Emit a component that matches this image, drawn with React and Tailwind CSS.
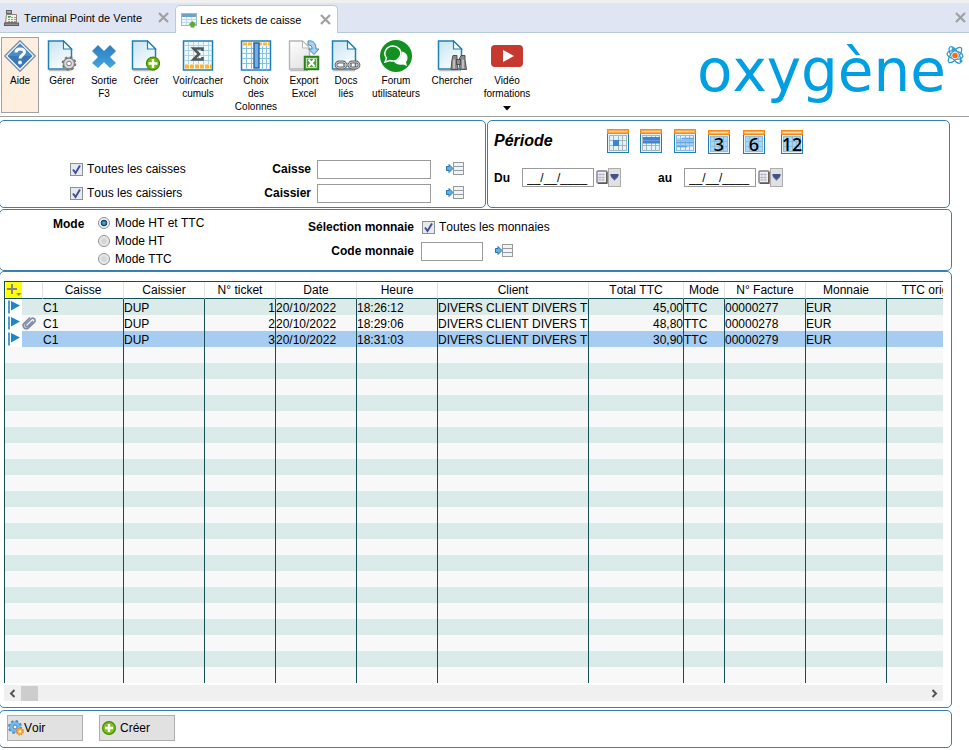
import React from "react";

/* ---------- small drawings ---------- */

function Cross({ size = 11 }) {
  return (
    <svg width={size} height={size} viewBox="0 0 11 11" aria-hidden="true">
      <path d="M1 1l9 9M10 1l-9 9" stroke="#a0a0a0" strokeWidth="2.2" fill="none" />
    </svg>
  );
}

function RegisterIcon() {
  return (
    <svg width="16" height="16" viewBox="0 0 16 16" aria-hidden="true">
      <rect x="2.500" y="0.500" width="5" height="3" fill="#a8a8a8" stroke="#666" />
      <rect x="4" y="3" width="2" height="2" fill="#666" />
      <path d="M2.500 4.500h10v8h-11z" fill="#f3f0ea" stroke="#8c8478" />
      <path d="M4 7.500h8M4 9.500h8M4 11.500h8" stroke="#f0842a" strokeDasharray="2 1" />
      <path d="M4 6.500h3" stroke="#3a9d46" />
      <rect x="0.500" y="13" width="14" height="2.500" fill="#8f8f8f" stroke="#5d5d5d" />
    </svg>
  );
}

function TicketTabIcon() {
  return (
    <svg width="17" height="16" viewBox="0 0 17 16" aria-hidden="true">
      <rect x="0.500" y="1.500" width="15" height="12" fill="#eef7fb" stroke="#9dbccf" />
      <rect x="1" y="2" width="14" height="3" fill="#6ba3c8" />
      <path d="M1 7.500h14M1 10.500h14M5.500 5v8M10.500 5v8" stroke="#bcdbe9" />
      <path d="M11.500 9l4 3.500-2 .5v2.500h-4V13l-2-.500z" fill="#5cab2e" />
    </svg>
  );
}

function IconBox({ children, box = "0 0 32 32" }) {
  return (
    <svg width="32" height="32" viewBox={box} className="shrink-0" aria-hidden="true">
      <defs>
        <linearGradient id="sheetFill" x1="0" y1="0" x2="0.6" y2="1">
          <stop offset="0" stopColor="#c5e4f3" />
          <stop offset="1" stopColor="#fbfdfe" />
        </linearGradient>
        <linearGradient id="crossFill" x1="0" y1="0" x2="0" y2="1">
          <stop offset="0" stopColor="#2e7fc0" />
          <stop offset="1" stopColor="#43a3df" />
        </linearGradient>
        <linearGradient id="greyFill" x1="0" y1="0" x2="0.6" y2="1">
          <stop offset="0" stopColor="#ffffff" />
          <stop offset="1" stopColor="#e4e4e4" />
        </linearGradient>
      </defs>
      {children}
    </svg>
  );
}

const sheetBox = "1 0 32 32";

function Sheet() {
  return (
    <g>
      <path d="M4 30.500h22" stroke="#bbb" strokeWidth="1.500" />
      <path d="M3.500 1h15l8 8v20h-23z" fill="url(#sheetFill)" stroke="#2080b4" strokeWidth="1.500" />
      <path d="M18.500 1v8h8z" fill="#fff" stroke="#2080b4" strokeWidth="1.200" />
    </g>
  );
}

function HelpIcon() {
  return (
    <IconBox>
      <path d="M16 0.800L31.200 16 16 31.200 0.800 16z" fill="#fff" stroke="#7c91a8" strokeWidth="1.500" strokeLinejoin="round" />
      <path d="M16 3.500L28.500 16 16 28.500 3.500 16z" fill="#3a78b5" />
      <path d="M16 3.500L28.500 16h-25z" fill="#4b8bc6" />
      <path d="M12 12.500c0-4.500 8.500-4.500 8.500-.500 0 3-4.500 3-4.500 6.500" fill="none" stroke="#fff" strokeWidth="3" />
      <circle cx="16" cy="22.500" r="1.900" fill="#fff" />
    </IconBox>
  );
}

function ManageIcon() {
  return (
    <IconBox box={sheetBox}>
      <Sheet />
      <circle cx="24" cy="23.500" r="6.300" fill="#999" stroke="#777" strokeWidth="2" strokeDasharray="2.500 2.450" />
      <circle cx="24" cy="23.500" r="5.300" fill="#dcdcdc" stroke="#7c7c7c" />
      <circle cx="24" cy="23.500" r="2.300" fill="#fff" stroke="#777" />
    </IconBox>
  );
}

function ExitIcon() {
  return (
    <IconBox>
      <path d="M10 5l6 6 6-6 6 6-6 6 6 6-6 5-6-6-6 6-6-5 6-6-6-6z" fill="url(#crossFill)" />
    </IconBox>
  );
}

function CreateIcon() {
  return (
    <IconBox box={sheetBox}>
      <Sheet />
      <circle cx="24" cy="23.500" r="6.500" fill="#6db70b" stroke="#3f8407" strokeWidth="1.200" />
      <path d="M24 19v9M19.500 23.500h9" stroke="#fff" strokeWidth="2.500" />
    </IconBox>
  );
}

function SumIcon() {
  return (
    <IconBox>
      <rect x="1.500" y="1" width="29" height="29" fill="#f2f9fc" stroke="#2080b4" strokeWidth="1.500" />
      <path d="M2 5.500h28M2 10.500h28M2 15.500h28M2 20.500h28M6.500 2v22M11.500 2v22M16.500 2v22M21.500 2v22M26.500 2v22" stroke="#a9d4ea" />
      <path d="M3 26.500h27" stroke="#fbb734" strokeWidth="4" strokeDasharray="4 1" />
      <path d="M20.500 11V8.500H11.500l5.500 5.500-5.500 5.500h9V17" fill="none" stroke="#555" strokeWidth="2.600" />
    </IconBox>
  );
}

function ColumnsIcon() {
  return (
    <IconBox>
      <rect x="1.500" y="1" width="29" height="29" fill="#f6fbfd" stroke="#2080b4" strokeWidth="1.500" />
      <path d="M3 4h27" stroke="#fbb734" strokeWidth="3" strokeDasharray="4 1" />
      <path d="M2 8.500h28M2 13.500h28M2 18.500h28M2 23.500h28M6.500 6v24M11.500 6v24M22.500 6v24M26.500 6v24" stroke="#85c1e0" />
      <rect x="14" y="3" width="5" height="25" fill="#75aee4" stroke="#165a9c" strokeWidth="1.300" />
    </IconBox>
  );
}

function ExcelIcon() {
  return (
    <IconBox>
      <path d="M2 30.500h18" stroke="#bbb" strokeWidth="1.500" />
      <path d="M1.500 1h13l7 7v21h-20z" fill="url(#greyFill)" stroke="#b5b5b5" strokeWidth="1.400" />
      <path d="M14.500 1v7h7z" fill="#fff" stroke="#b5b5b5" />
      <path d="M20 1c5-1 8 2 8 8H31l-5 5.500-5.500-5.500h3.500c0-3-1-4-4-4z" fill="#a6d0ef" stroke="#4389c2" />
      <rect x="16.500" y="16.500" width="14" height="13" fill="#4fa136" stroke="#2f7d20" strokeWidth="1.500" />
      <rect x="18.500" y="18.500" width="10" height="9" fill="none" stroke="#d9efd0" strokeWidth="0.800" />
      <path d="M20.500 19.500l6 7M26.500 19.500l-6 7" stroke="#fff" strokeWidth="2" />
    </IconBox>
  );
}

function LinkedDocsIcon() {
  return (
    <IconBox box={sheetBox}>
      <Sheet />
      <g fill="none" stroke="#666" strokeWidth="2.800">
        <rect x="7" y="22" width="10" height="6" rx="3" />
        <rect x="20" y="22" width="10" height="6" rx="3" />
        <path d="M14 25h9" />
      </g>
      <g fill="none" stroke="#ccc" strokeWidth="1">
        <rect x="7" y="22" width="10" height="6" rx="3" />
        <rect x="20" y="22" width="10" height="6" rx="3" />
        <path d="M14 25h9" />
      </g>
    </IconBox>
  );
}

function ForumIcon() {
  return (
    <IconBox>
      <circle cx="16" cy="16" r="16" fill="#109120" />
      <path d="M13 6a8 7.500 0 0 0-6.500 12L5 22l5-1.500A8 7.500 0 1 0 13 6z" fill="none" stroke="#fff" strokeWidth="1.500" />
      <path d="M21.500 11.500c4 .5 6 3.500 6 6.500 0 2-.7 3-1.500 4l1 4-4-1.500c-4 .8-8-.5-9.500-3.500 5 0 8.500-4 8-9.500z" fill="#fff" />
    </IconBox>
  );
}

function SearchIcon() {
  return (
    <IconBox box={sheetBox}>
      <Sheet />
      <g fill="#8b8b8b" stroke="#505050">
        <path d="M18 15.500h4v4l1 10h-7l1-10zM26 15.500h4v4l1.500 10h-6.500l-1-10z" />
        <rect x="21.500" y="19.500" width="4" height="5" />
      </g>
      <path d="M19 19.500v9M28 19.500v9" stroke="#d0d0d0" strokeWidth="1.500" />
    </IconBox>
  );
}

function VideoIcon() {
  return (
    <IconBox>
      <rect x="0" y="5" width="32" height="22" rx="4" fill="#c5392f" />
      <path d="M12 10l11 6-11 6z" fill="#fff" />
    </IconBox>
  );
}

function AtomMark() {
  return (
    <svg width="18" height="20" viewBox="0 0 18 20" className="mt-0.5" aria-hidden="true">
      <g fill="none" stroke="#2d9bd6" strokeWidth="1.300">
        <ellipse cx="9" cy="10" rx="9.500" ry="3.800" transform="rotate(58 9 10)" />
        <ellipse cx="9" cy="10" rx="9.500" ry="3.800" transform="rotate(-50 9 10)" />
        <ellipse cx="9" cy="10" rx="8" ry="4" transform="rotate(10 9 10)" />
      </g>
      <circle cx="9" cy="10.500" r="3.300" fill="#ff6a0d" stroke="#fff" strokeWidth="0.800" />
      <circle cx="15" cy="16" r="1.500" fill="#2d9bd6" />
      <circle cx="7" cy="4.500" r="1.400" fill="#2d9bd6" />
    </svg>
  );
}

function LookupIcon() {
  return (
    <svg width="18" height="14" viewBox="0 0 18 14" aria-hidden="true">
      <rect x="7.500" y="0.500" width="10" height="12" fill="#e9f7fc" stroke="#9a9a9a" />
      <path d="M8 4.500h9M8 8.500h9" stroke="#9a9a9a" />
      <path d="M0.500 4.500H3V2.500l4 4-4 4v-2H0.500z" fill="#5eb0e6" stroke="#2b71ab" />
    </svg>
  );
}

function CalendarIcon({ mode }) {
  return (
    <svg width="22" height="24" viewBox="0 0 22 24" className="col-start-1 row-start-1" aria-hidden="true">
      <rect x="0.500" y="0.500" width="21" height="23" fill="#e3f3fb" stroke="#2080b4" />
      <rect x="0.500" y="0.500" width="21" height="4" fill="#fda94c" stroke="#f58a12" />
      <rect x="2" y="2" width="18" height="1" fill="#fdd9a6" />
      {mode === "number" && <rect x="3" y="7" width="16" height="14" fill="#a9d5f6" />}
      {mode === "month" && <rect x="3" y="9" width="16" height="9" fill="#a9d5f6" />}
      <path
        d="M2 6.500h18M2 11.500h18M2 16.500h18M2 21.500h18M2.500 6v16M6.500 6v16M11.500 6v16M15.500 6v16M19.500 6v16"
        stroke={mode === "day" || mode === "week" ? "#a9b4ba" : "#8fbbdc"}
      />
      {mode === "day" && <rect x="6" y="11" width="6" height="6" fill="#3a84da" />}
      {mode === "week" && <path d="M3 9.500h17M3 13h17" stroke="#3a84da" strokeWidth="3" />}
      {mode === "month" && <path d="M8 9.500h12M3 13.500h17M3 17.500h10" stroke="#62a4e6" strokeWidth="1.500" />}
    </svg>
  );
}

function FlagIcon() {
  return (
    <svg width="17" height="16" viewBox="0 0 17 16" className="block" aria-hidden="true">
      <path d="M4 1.500v13" stroke="#1b86cc" strokeWidth="1.600" />
      <path d="M6 2L15 6.500l-9 5z" fill="#1b86cc" />
    </svg>
  );
}

function ClipIcon() {
  return (
    <svg width="14" height="14" viewBox="0 0 14 14" className="block" aria-hidden="true">
      <path d="M11 5L5.500 10.500a1.500 1.500 0 0 1-2-2L9 3a2.300 2.300 0 0 1 3.500 3.200L6 12.200A3.200 3.200 0 0 1 1.500 8L8 1.500" fill="none" stroke="#828ca6" strokeWidth="1.700" />
    </svg>
  );
}

function GearsIcon() {
  return (
    <svg width="16" height="16" viewBox="0 0 16 16" aria-hidden="true">
      <circle cx="7" cy="7" r="5.800" fill="#63a9df" stroke="#4a90cc" strokeWidth="2.400" strokeDasharray="2.400 2.150" />
      <circle cx="7" cy="7" r="5" fill="#7ab8e8" />
      <circle cx="7" cy="7" r="2" fill="#fff" stroke="#3b82bf" />
      <circle cx="12" cy="11.500" r="3.200" fill="#fbb94b" stroke="#d8851a" strokeWidth="1.500" strokeDasharray="1.500 1" />
      <circle cx="12" cy="11.500" r="1.100" fill="#fff" />
    </svg>
  );
}

function PlusIcon() {
  return (
    <svg width="14" height="14" viewBox="0 0 14 14" aria-hidden="true">
      <circle cx="7" cy="7" r="6.400" fill="#7dc21a" stroke="#488c0b" strokeWidth="1.200" />
      <path d="M7 3v8M3 7h8" stroke="#fff" strokeWidth="2.400" />
    </svg>
  );
}

function Chevron({ right }) {
  return (
    <svg width="7" height="9" viewBox="0 0 7 9" aria-hidden="true">
      <path d={right ? "M1.500 1l3.500 3.500L1.500 8" : "M5.500 1L2 4.500 5.500 8"} fill="none" stroke="#555" strokeWidth="2" />
    </svg>
  );
}

/* ---------- form parts ---------- */

function Check({ id, label }) {
  return (
    <div className="flex h-6 items-center gap-1">
      <span className="grid size-[13px]">
        <input
          id={id}
          type="checkbox"
          defaultChecked
          className="peer col-start-1 row-start-1 size-[13px] appearance-none border border-[#8e8f8f] bg-[#e6e9ee]"
        />
        <svg viewBox="0 0 13 13" className="pointer-events-none invisible col-start-1 row-start-1 size-[13px] peer-checked:visible" aria-hidden="true">
          <path d="M3 6.500l2.500 3.500L10 2.500" fill="none" stroke="#3f4f91" strokeWidth="1.900" />
        </svg>
      </span>
      <label htmlFor={id}>{label}</label>
    </div>
  );
}

function Radio({ id, label, checked }) {
  return (
    <div className="flex h-[18px] items-center gap-[5px]">
      <input
        id={id}
        type="radio"
        name="mode"
        defaultChecked={checked}
        className="size-3 appearance-none rounded-full border border-[#8e8f8f] bg-[radial-gradient(circle,#d4d6d9_30%,#f4f4f4_75%)] checked:bg-[radial-gradient(circle,#3fa9dc_12%,#123f6b_42%,#f4f4f4_52%)]"
      />
      <label htmlFor={id}>{label}</label>
    </div>
  );
}

function LookupField({ id, label, width, gap }) {
  return (
    <>
      <label htmlFor={id} className="text-right font-bold">{label}</label>
      <div className="flex h-6 items-center">
        <input id={id} className={`h-[19px] border border-[#9a9a9a] px-1 ${width}`} />
        <button type="button" aria-label={`Liste ${label}`} className={gap}><LookupIcon /></button>
      </div>
    </>
  );
}

function DateField({ id, label, labelWidth }) {
  return (
    <div className="flex items-center">
      <label htmlFor={id} className={`font-bold ${labelWidth}`}>{label}</label>
      <input id={id} defaultValue="__/__/____" className="h-[19px] w-[72px] border border-[#9a9a9a] px-1" />
      <button type="button" aria-label="Calendrier" className="ml-0.5 h-[19px]">
        <svg width="12" height="15" viewBox="0 0 12 15" aria-hidden="true">
          <rect x="1" y="1" width="10" height="12" rx="1" fill="#f1f2f6" stroke="#86807e" strokeWidth="1.400" />
          <path d="M10.800 2v11.300H2" fill="none" stroke="#635a58" strokeWidth="1.500" />
          <path d="M2 4.500h7M2 7.500h7M2 10h7M4 3v8M7 3v8" stroke="#b5bbd0" />
        </svg>
      </button>
      <button type="button" aria-label="Choisir" className="flex h-[19px] w-[13px] items-center justify-center border border-[#acacac] bg-[#e1e1e1]">
        <svg width="9" height="7" viewBox="0 0 9 7" aria-hidden="true">
          <path d="M0.500 0h8v2L4.500 6l-4-4z" fill="#3f5484" />
          <path d="M1 3l3.500 3.500L8 3" fill="none" stroke="#8492b2" />
        </svg>
      </button>
    </div>
  );
}

/* ---------- data ---------- */

const tools = [
  [["Gérer"], ManageIcon, "w-[42px]"],
  [["Sortie", "F3"], ExitIcon, "w-[42px]"],
  [["Créer"], CreateIcon, "w-[42px]"],
  [["Voir/cacher", "cumuls"], SumIcon, "w-[62px]"],
  [["Choix", "des", "Colonnes"], ColumnsIcon, "w-[54px]"],
  [["Export", "Excel"], ExcelIcon, "w-[42px]"],
  [["Docs", "liés"], LinkedDocsIcon, "w-[42px]"],
  [["Forum", "utilisateurs"], ForumIcon, "w-[58px]"],
  [["Chercher"], SearchIcon, "w-[54px]"],
  [["Vidéo", "formations"], VideoIcon, "w-[56px]", true],
];

const columns = [
  ["Caisse", "w-[81px]"],
  ["Caissier", "w-[81px]"],
  ["N° ticket", "w-[71px]", true],
  ["Date", "w-[81px]"],
  ["Heure", "w-[81px]"],
  ["Client", "w-[151px]"],
  ["Total TTC", "w-[95px]", true],
  ["Mode", "w-[41px]"],
  ["N° Facture", "w-[81px]"],
  ["Monnaie", "w-[81px]"],
  ["TTC origine", "w-[93px]"],
];

const tickets = [
  ["C1", "DUP", "1", "20/10/2022", "18:26:12", "DIVERS CLIENT DIVERS TR", "45,00", "TTC", "00000277", "EUR", ""],
  ["C1", "DUP", "2", "20/10/2022", "18:29:06", "DIVERS CLIENT DIVERS TR", "48,80", "TTC", "00000278", "EUR", ""],
  ["C1", "DUP", "3", "20/10/2022", "18:31:03", "DIVERS CLIENT DIVERS TR", "30,90", "TTC", "00000279", "EUR", ""],
];

const rows = Array.from({ length: 24 }, (_, i) => tickets[i] || null);

const panel = "rounded-[5px] border border-[#3a7fb4]";

const periods = [
  ["Jour", "day", ""],
  ["Semaine", "week", ""],
  ["Mois", "month", ""],
  ["3 mois", "number", "3"],
  ["6 mois", "number", "6"],
  ["12 mois", "number", "12"],
];
const periodGaps = ["", "ml-[11px]", "ml-3", "ml-3", "ml-[13px]", "ml-4"];

function rowColour(i) {
  if (i === 2) return "bg-[#a6ccf1]";
  return i % 2 === 0 ? "bg-[#daebea]" : "bg-[#f8f8f8]";
}

/* ---------- page ---------- */

export default function App() {
  return (
    <div className="min-h-screen overflow-hidden bg-white font-['Liberation_Sans',Arial,sans-serif] text-[12px] leading-4 text-black [font-kerning:none]">
      <nav className="flex h-[33px] items-end border-t-[3px] border-b border-t-[#f0f0f0] border-b-[#b9c9de] bg-[#e0e5f3] text-[11px]">
        <div className="flex h-[29px] w-[175px] items-center pl-1">
          <RegisterIcon />
          <button type="button" className="ml-1 whitespace-nowrap">Terminal Point de Vente</button>
          <button type="button" aria-label="Fermer" className="mr-[6px] ml-auto"><Cross /></button>
        </div>
        <div className="-mb-px flex h-7 w-[163px] items-center rounded-t-[5px] border border-b-0 border-[#b9c9de] bg-white pl-[5px]">
          <TicketTabIcon />
          <button type="button" className="ml-0.5 whitespace-nowrap">Les tickets de caisse</button>
          <button type="button" aria-label="Fermer" className="mr-[6px] ml-auto"><Cross /></button>
        </div>
        <button type="button" aria-label="Fermer tout" className="mr-[3px] mb-[9px] ml-auto"><Cross /></button>
      </nav>

      <header className="flex h-[84px] items-start border-b border-[#a0a0a0] pt-1 pl-px text-[10px] leading-[13px]">
        <button type="button" className="mr-0.5 flex h-[76px] w-[38px] flex-col items-center gap-0.5 border border-[#a0a0a0] bg-[#fdeee0] pt-0.5">
          <HelpIcon />
          Aide
        </button>
        {tools.map(([lines, Icon, width, menu]) => (
          <button key={lines[0]} type="button" className={`flex shrink-0 flex-col items-center gap-0.5 pt-[3px] ${width}`}>
            <Icon />
            <span>
              {lines.map((line) => (
                <span key={line} className="block">{line}</span>
              ))}
            </span>
            {menu && (
              <svg width="8" height="5" viewBox="0 0 8 5" className="mt-1" aria-hidden="true"><path d="M0 0h8L4 4.500z" /></svg>
            )}
          </button>
        ))}
        <div className="mt-[6px] mr-[5px] ml-auto flex items-start">
          <span className="font-['DejaVu_Sans',sans-serif] text-[58px] leading-[56px] text-[#009fe3]">oxygène</span>
          <AtomMark />
        </div>
      </header>

      <main className="-ml-px mr-[17px] pt-[3px]">
        <div className="mr-0.5 flex h-[88px] gap-px">
          <section className={`flex w-[487px] items-start pt-9 pl-[70px] ${panel}`}>
            <div className="w-[178px]">
              <Check id="all-tills" label="Toutes les caisses" />
              <Check id="all-cashiers" label="Tous les caissiers" />
            </div>
            <div className="grid grid-cols-[63px_auto] items-center gap-x-[6px]">
              <LookupField id="till" label="Caisse" width="w-[114px]" gap="ml-[15px]" />
              <LookupField id="cashier" label="Caissier" width="w-[114px]" gap="ml-[15px]" />
            </div>
          </section>

          <section className={`flex-1 pt-2 pl-[6px] ${panel}`}>
            <div className="flex items-center">
              <h2 className="w-[113px] text-[16px] leading-6 font-bold italic">Période</h2>
              {periods.map(([name, mode, text], i) => (
                <button key={name} type="button" aria-label={name} className={`grid h-6 w-[22px] place-items-center ${periodGaps[i]}`}>
                  <CalendarIcon mode={mode} />
                  <span className="col-start-1 row-start-1 mt-[5px] font-['Noto_Sans',sans-serif] text-[18px] leading-5 font-medium">{text}</span>
                </button>
              ))}
            </div>
            <div className="mt-[15px] flex gap-[37px]">
              <DateField id="from" label="Du" labelWidth="w-7" />
              <DateField id="to" label="au" labelWidth="w-[26px]" />
            </div>
          </section>
        </div>

        <section className={`mt-px flex h-[62px] items-start pl-[53px] ${panel}`}>
          <div className="mt-[6px] w-[45px] font-bold">Mode</div>
          <div className="mt-1 w-[204px]">
            <Radio id="m-both" label="Mode HT et TTC" checked />
            <Radio id="m-ht" label="Mode HT" />
            <Radio id="m-ttc" label="Mode TTC" />
          </div>
          <div className="mt-[5px] grid grid-cols-[112px_auto] items-center gap-x-[7px]">
            <div className="text-right font-bold">Sélection monnaie</div>
            <div className="pl-px"><Check id="all-currencies" label="Toutes les monnaies" /></div>
            <LookupField id="currency" label="Code monnaie" width="w-[62px]" gap="ml-3" />
          </div>
        </section>

        <section className={`pt-[9px] pr-2 pb-[6px] pl-1 ${panel}`}>
          <div className="overflow-hidden border-t border-l border-[#144e57]">
            <table className="w-[955px] table-fixed border-separate border-spacing-0">
              <thead>
                <tr className="h-[17px]">
                  <th className="h-[17px] w-[17px] border-b border-[#144e57] p-0 leading-none">
                    <button type="button" aria-label="Options" className="ml-px block h-4 w-4 bg-[#ffff00]">
                      <svg width="16" height="16" viewBox="0 0 16 16" aria-hidden="true">
                        <path d="M6 2v10M1 7h10" stroke="#85858f" strokeWidth="2" />
                        <path d="M10 11h5.500L12.700 14z" fill="#85858f" />
                      </svg>
                    </button>
                  </th>
                  <th className="w-[21px] border-r border-b border-r-[#e2e2e2] border-b-[#144e57] p-0" />
                  {columns.map(([name, width]) => (
                    <th key={name} className={`overflow-hidden border-r border-b border-r-[#e2e2e2] border-b-[#144e57] p-0 leading-4 font-normal whitespace-nowrap ${width}`}>
                      {name}
                    </th>
                  ))}
                </tr>
              </thead>
              <tbody>
                {rows.map((row, i) => (
                  <tr key={i} className={`h-4 ${rowColour(i)}`}>
                    <td className={`h-4 p-0 ${row ? "bg-white" : ""}`}>{row && <FlagIcon />}</td>
                    <td className="p-0">{i === 1 && <ClipIcon />}</td>
                    {columns.map(([name, , numeric], c) => (
                      <td key={name} className={`overflow-hidden border-r border-[#144e57] px-0 pt-0.5 pb-0 leading-[14px] whitespace-nowrap ${numeric ? "text-right" : ""}`}>
                        {row ? row[c] : ""}
                      </td>
                    ))}
                  </tr>
                ))}
              </tbody>
            </table>
          </div>
          <div className="mt-0.5 flex h-4 items-center bg-[#f0f0f0]">
            <button type="button" aria-label="Défiler à gauche" className="flex h-4 w-[17px] items-center justify-center"><Chevron /></button>
            <div className="h-[15px] w-[17px] bg-[#cdcdcd]" />
            <button type="button" aria-label="Défiler à droite" className="ml-auto flex h-4 w-[17px] items-center justify-center"><Chevron right /></button>
          </div>
        </section>

        <section className={`mt-0.5 flex h-[38px] gap-4 pt-1 pl-[7px] ${panel}`}>
          <button type="button" className="flex h-[26px] w-[76px] items-center border border-[#adadad] bg-[#e1e1e1]">
            <GearsIcon />
            Voir
          </button>
          <button type="button" className="flex h-[26px] w-[76px] items-center gap-1 border border-[#adadad] bg-[#e1e1e1] pl-0.5">
            <PlusIcon />
            Créer
          </button>
        </section>
      </main>
    </div>
  );
}
